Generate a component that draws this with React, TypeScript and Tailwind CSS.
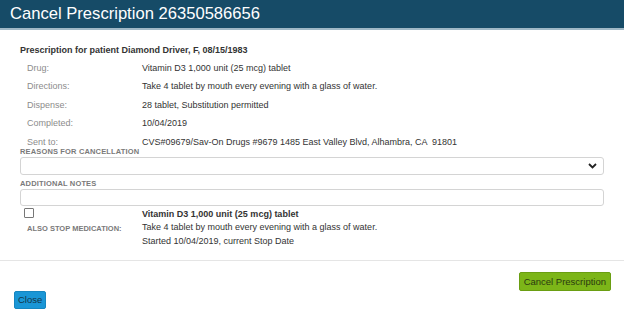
const rows: [string, string][] = [
  ["Drug:", "Vitamin D3 1,000 unit (25 mcg) tablet"],
  ["Directions:", "Take 4 tablet by mouth every evening with a glass of water."],
  ["Dispense:", "28 tablet, Substitution permitted"],
  ["Completed:", "10/04/2019"],
  ["Sent to:", "CVS#09679/Sav-On Drugs #9679 1485 East Valley Blvd, Alhambra, CA  91801"],
];

export default function App() {
  return (
    <div className="w-[624px] h-[320px] bg-white overflow-hidden font-['Liberation_Sans',Arial,sans-serif] text-[#333]">
      {/* Header */}
      <div className="h-[30px] bg-[#164b67] border-b-2 border-[#9fb8c6] flex items-center pl-[10px]">
        <h1 className="text-white text-[16.6px] leading-none">Cancel Prescription 26350586656</h1>
      </div>

      {/* Body */}
      <div className="px-[20px] pt-[14px]">
        <p className="font-bold text-[9px] leading-[13px]">Prescription for patient Diamond Driver, F, 08/15/1983</p>
        <div className="mt-[2px]">
          {rows.map(([label, value]) => (
            <div key={label} className="flex h-[18.5px] items-center text-[9px]">
              <span className="w-[122px] pl-[7px] text-[#8c8c8c]">{label}</span>
              <span className="whitespace-pre">{value}</span>
            </div>
          ))}
        </div>

        <div className="text-[7.5px] leading-[9px] font-bold text-[#7a7a7a] tracking-[0.15px] mt-[-5px]">REASONS FOR CANCELLATION</div>
        <div className="h-[18px] border border-[#d4d4d4] rounded-[3px] flex items-center justify-end pr-[6px] mt-[1px]">
          <svg width="9" height="6" viewBox="0 0 9 6">
            <path d="M1 1l3.5 3.5L8 1" fill="none" stroke="#222" strokeWidth="1.8" />
          </svg>
        </div>

        <div className="text-[7.5px] leading-[9px] font-bold text-[#7a7a7a] tracking-[0.15px] mt-[4px]">ADDITIONAL NOTES</div>
        <div className="h-[17px] border border-[#d4d4d4] rounded-[3px] mt-[1px]" />

        <div className="flex mt-[2px]">
          <div className="w-[122px] flex flex-col">
            <div className="ml-[4px] w-[10px] h-[10px] border border-[#777] rounded-[1px]" />
            <div className="pl-[7px] mt-[6px] text-[7.5px] leading-[9px] font-bold text-[#7a7a7a]">ALSO STOP MEDICATION:</div>
          </div>
          <div className="text-[9px] leading-[13.5px]">
            <div className="font-bold">Vitamin D3 1,000 unit (25 mcg) tablet</div>
            <div>Take 4 tablet by mouth every evening with a glass of water.</div>
            <div>Started 10/04/2019, current Stop Date</div>
          </div>
        </div>
      </div>

      {/* Footer */}
      <div className="mt-[12px] border-t border-[#e5e5e5]">
        <div className="flex justify-end pr-[13px] pt-[11px]">
          <button className="h-[19px] px-[4px] bg-[#7cb518] border border-[#6a9e12] rounded-[2px] text-[9.5px] text-[#2b3a10] leading-none">
            Cancel Prescription
          </button>
        </div>
        <div className="flex pl-[14px]">
          <button className="h-[18px] px-[3px] bg-[#1a96d6] border border-[#1686c0] rounded-[2px] text-[9.5px] text-[#123548] leading-none">
            Close
          </button>
        </div>
      </div>
    </div>
  );
}
